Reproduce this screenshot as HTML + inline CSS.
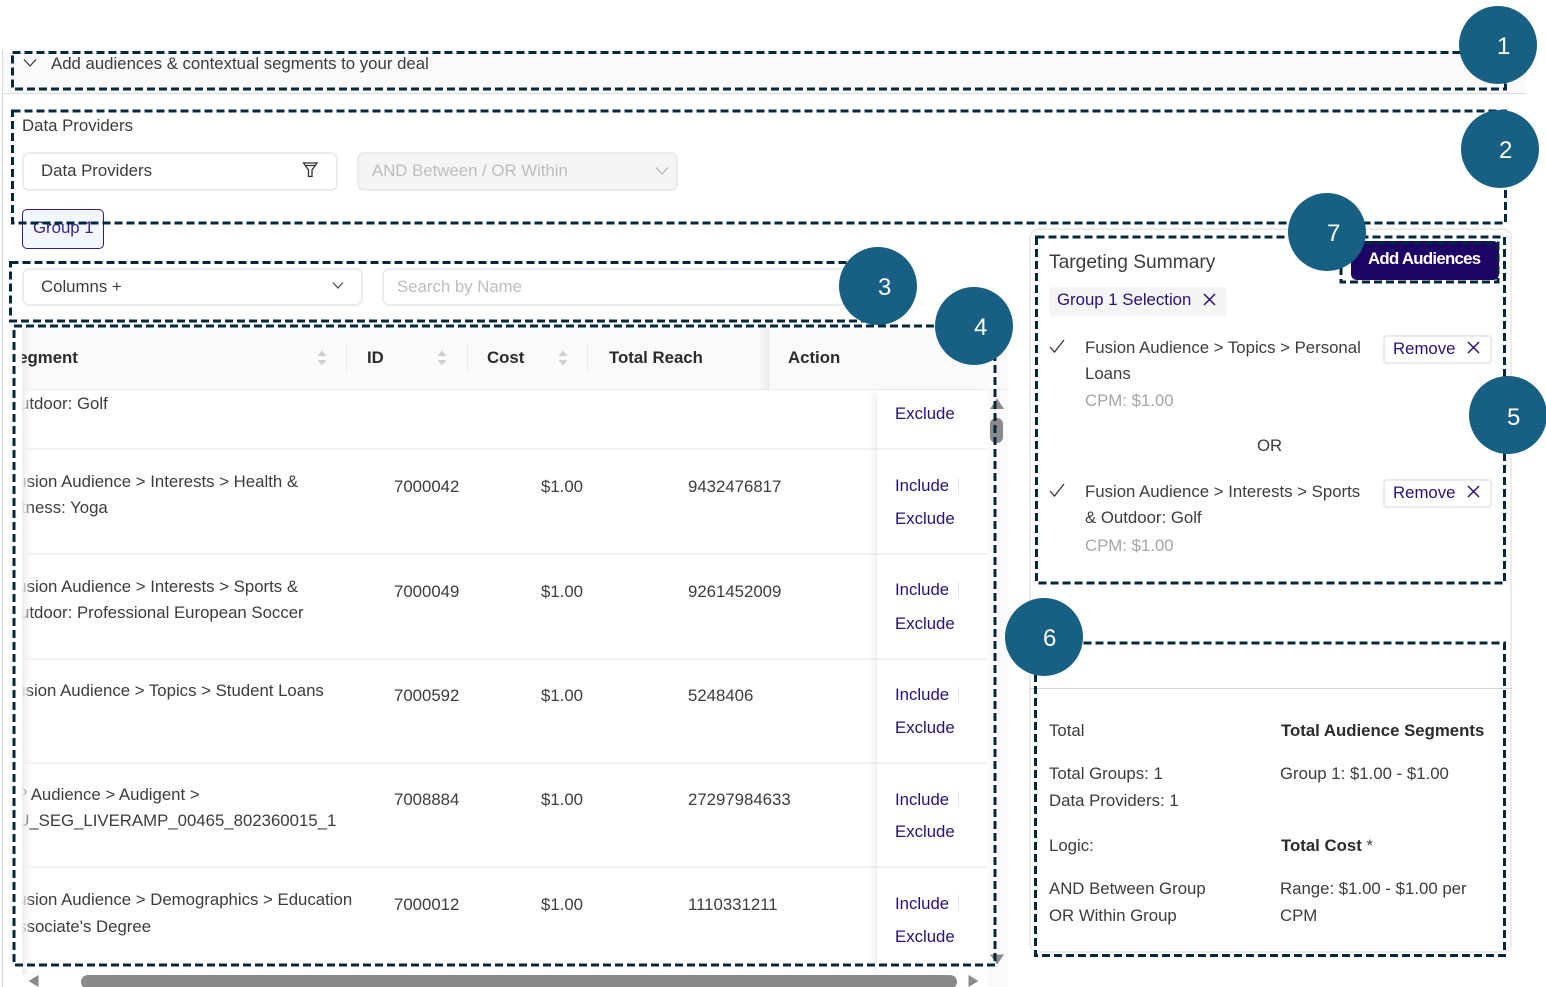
<!DOCTYPE html>
<html><head><meta charset="utf-8"><style>
html,body{margin:0;padding:0;background:#fff}
#p{position:relative;width:1546px;height:987px;overflow:hidden;background:#fff;font-family:"Liberation Sans",sans-serif;font-size:16.8px;color:#3c3c3c}
#p div{position:absolute;box-sizing:border-box}
.t{white-space:nowrap;line-height:20px}
.g{color:#a6a6a6}
.b{font-weight:bold;color:#2b2b2b}
.u{color:#2a0f78}
.box{background:#fff;border:2px solid #ebebeb;border-radius:7px}
.c{width:78px;height:78px;border-radius:50%;background:#176084}
.n{color:#fff;font-size:24px;line-height:28px;white-space:nowrap}
svg{position:absolute;overflow:visible}
</style></head><body><div id="p">
<div style="left:2px;top:50px;width:1px;height:937px;background:#d8d8d8"></div>
<div style="left:3px;top:52px;width:1523px;height:41px;background:#fafafa"></div>
<div style="left:3px;top:93px;width:1523px;height:1px;background:#dedede"></div>
<svg style="left:23px;top:58px" width="14" height="10"><path d="M1 1.5L7 8L13 1.5" fill="none" stroke="#333" stroke-width="1.2"/></svg>
<div class="t" style="left:51px;top:54px">Add audiences &amp; contextual segments to your deal</div>

<div class="t" style="left:22px;top:116px">Data Providers</div>
<div class="box" style="left:22px;top:152px;width:316px;height:39px"></div>
<div class="t" style="left:41px;top:161px">Data Providers</div>
<svg style="left:302px;top:161px" width="17" height="17"><path d="M1.5 2H15L10 9V15.5H6.5V9Z M3.5 4.500H13" fill="none" stroke="#333" stroke-width="1.3"/></svg>
<div class="box" style="left:357px;top:152px;width:321px;height:39px;background:#f5f5f5"></div>
<div class="t" style="left:372px;top:161px;color:#bdbdbd">AND Between / OR Within</div>
<svg style="left:655px;top:166px" width="14" height="10"><path d="M1 1.5L7 8L13 1.5" fill="none" stroke="#b5b5b5" stroke-width="1.2"/></svg>
<div style="left:22px;top:209px;width:82px;height:40px;background:#f2f6ff;border:1px solid #2f1a88;border-radius:5px"></div>
<div class="t u" style="left:33px;top:218px;color:#3a2590">Group 1</div>

<div class="box" style="left:22px;top:268px;width:341px;height:38px"></div>
<div class="t" style="left:41px;top:277px">Columns +</div>
<svg style="left:332px;top:281px" width="12" height="9"><path d="M1 1.5L6 7L11 1.5" fill="none" stroke="#444" stroke-width="1.2"/></svg>
<div class="box" style="left:382px;top:268px;width:490px;height:38px"></div>
<div class="t" style="left:397px;top:277px;color:#bdbdbd">Search by Name</div>

<!-- table -->
<div style="left:22px;top:328px;width:986px;height:62px;background:#fafafa;border-bottom:1px solid #eee"></div>
<div style="left:22px;top:390px;width:966px;height:585px;overflow:hidden;background:#fff">
 <div style="left:0;top:58px;width:966px;height:2px;background:#f2f2f2"></div>
 <div style="left:0;top:163px;width:966px;height:2px;background:#f2f2f2"></div>
 <div style="left:0;top:268px;width:966px;height:2px;background:#f2f2f2"></div>
 <div style="left:0;top:372px;width:966px;height:2px;background:#f2f2f2"></div>
 <div style="left:0;top:476px;width:966px;height:2px;background:#f2f2f2"></div>
 <div class="t" style="left:-15px;top:4px">Outdoor: Golf</div>
 <div class="t" style="left:-15px;top:82px">Fusion Audience &gt; Interests &gt; Health &amp;</div>
 <div class="t" style="left:-15px;top:108px">Fitness: Yoga</div>
 <div class="t" style="left:-15px;top:187px">Fusion Audience &gt; Interests &gt; Sports &amp;</div>
 <div class="t" style="left:-15px;top:213px">Outdoor: Professional European Soccer</div>
 <div class="t" style="left:-16px;top:291px">Fusion Audience &gt; Topics &gt; Student Loans</div>
 <div class="t" style="left:-18px;top:395px">DP Audience &gt; Audigent &gt;</div>
 <div class="t" style="left:-16px;top:421px">EU_SEG_LIVERAMP_00465_802360015_1</div>
 <div class="t" style="left:-15px;top:500px">Fusion Audience &gt; Demographics &gt; Education</div>
 <div class="t" style="left:-15px;top:527px">Associate's Degree</div>
</div>
<div style="left:22px;top:328px;width:10px;height:647px;background:linear-gradient(90deg,#eeeeee,rgba(255,255,255,0))"></div>
<div class="t b" style="left:22px;top:348px;width:56px;overflow:hidden"><span style="margin-left:-15px">Segment</span></div>
<div class="t b" style="left:367px;top:348px">ID</div>
<div class="t b" style="left:487px;top:348px">Cost</div>
<div class="t b" style="left:609px;top:348px">Total Reach</div>
<div class="t b" style="left:788px;top:348px">Action</div>
<div style="left:346px;top:344px;width:1px;height:28px;background:#ececec"></div>
<div style="left:467px;top:344px;width:1px;height:28px;background:#ececec"></div>
<div style="left:587px;top:344px;width:1px;height:28px;background:#ececec"></div>
<svg style="left:317px;top:350px" width="10" height="16"><path d="M5 0.5L9.500 6H0.500ZM5 15.500L9.500 10H0.500Z" fill="#cfcfcf"/></svg>
<svg style="left:437px;top:350px" width="10" height="16"><path d="M5 0.5L9.500 6H0.500ZM5 15.500L9.500 10H0.500Z" fill="#cfcfcf"/></svg>
<svg style="left:558px;top:350px" width="10" height="16"><path d="M5 0.5L9.500 6H0.500ZM5 15.500L9.500 10H0.500Z" fill="#cfcfcf"/></svg>
<div style="left:758px;top:328px;width:10px;height:62px;background:linear-gradient(90deg,rgba(0,0,0,0),rgba(0,0,0,.05))"></div>
<div style="left:768px;top:328px;width:1px;height:62px;background:#e8e8e8"></div>
<div style="left:877px;top:390px;width:111px;height:585px;background:#fff;box-shadow:-5px 0 7px -3px rgba(0,0,0,.09)"></div>
<div style="left:877px;top:448px;width:111px;height:2px;background:#f2f2f2"></div>
<div style="left:877px;top:553px;width:111px;height:2px;background:#f2f2f2"></div>
<div style="left:877px;top:658px;width:111px;height:2px;background:#f2f2f2"></div>
<div style="left:877px;top:762px;width:111px;height:2px;background:#f2f2f2"></div>
<div style="left:877px;top:866px;width:111px;height:2px;background:#f2f2f2"></div>
<div style="left:988px;top:390px;width:20px;height:597px;background:#fafafa"></div>

<div class="t" style="left:394px;top:477px">7000042</div><div class="t" style="left:541px;top:477px">$1.00</div><div class="t" style="left:688px;top:477px">9432476817</div>
<div class="t" style="left:394px;top:582px">7000049</div><div class="t" style="left:541px;top:582px">$1.00</div><div class="t" style="left:688px;top:582px">9261452009</div>
<div class="t" style="left:394px;top:686px">7000592</div><div class="t" style="left:541px;top:686px">$1.00</div><div class="t" style="left:688px;top:686px">5248406</div>
<div class="t" style="left:394px;top:790px">7008884</div><div class="t" style="left:541px;top:790px">$1.00</div><div class="t" style="left:688px;top:790px">27297984633</div>
<div class="t" style="left:394px;top:895px">7000012</div><div class="t" style="left:541px;top:895px">$1.00</div><div class="t" style="left:688px;top:895px">1110331211</div>

<div class="t u" style="left:895px;top:404px">Exclude</div>
<div class="t u" style="left:895px;top:476px">Include</div><div class="t u" style="left:895px;top:509px">Exclude</div>
<div class="t u" style="left:895px;top:580px">Include</div><div class="t u" style="left:895px;top:614px">Exclude</div>
<div class="t u" style="left:895px;top:685px">Include</div><div class="t u" style="left:895px;top:718px">Exclude</div>
<div class="t u" style="left:895px;top:790px">Include</div><div class="t u" style="left:895px;top:822px">Exclude</div>
<div class="t u" style="left:895px;top:894px">Include</div><div class="t u" style="left:895px;top:927px">Exclude</div>
<div style="left:958px;top:478px;width:1px;height:16px;background:#e4e4e4"></div>
<div style="left:958px;top:582px;width:1px;height:16px;background:#e4e4e4"></div>
<div style="left:958px;top:687px;width:1px;height:16px;background:#e4e4e4"></div>
<div style="left:958px;top:791px;width:1px;height:16px;background:#e4e4e4"></div>
<div style="left:958px;top:895px;width:1px;height:16px;background:#e4e4e4"></div>

<svg style="left:989px;top:398px" width="16" height="12"><path d="M8 0.5L15 11H1Z" fill="#8a8a8a"/></svg>
<div style="left:990px;top:418px;width:13px;height:25px;border-radius:6px;background:#8a8a8a"></div>
<svg style="left:989px;top:954px" width="16" height="11"><path d="M8 10.5L15 0.5H1Z" fill="#8a8a8a"/></svg>
<svg style="left:28px;top:975px" width="11" height="12"><path d="M0.5 6L10.500 0V12Z" fill="#8a8a8a"/></svg>
<div style="left:81px;top:975px;width:876px;height:14px;border-radius:7px;background:#8a8a8a"></div>
<svg style="left:968px;top:975px" width="11" height="12"><path d="M10.500 6L0.500 0V12Z" fill="#8a8a8a"/></svg>

<!-- right panel -->
<div style="left:1029px;top:228px;width:483px;height:725px;border:2px solid #ececec;border-radius:10px"></div>
<div style="left:1029px;top:688px;width:483px;height:1px;background:#d4d4d4"></div>
<div class="t" style="left:1049px;top:253px;font-size:19.2px">Targeting Summary</div>
<div style="left:1351px;top:241px;width:148px;height:39px;background:#1d0565;border-radius:6px"></div>
<div class="t" style="left:1368px;top:249px;color:#fff;font-weight:bold;letter-spacing:-.7px">Add Audiences</div>
<div style="left:1049px;top:287px;width:178px;height:29px;background:#f5f5f5;border-radius:5px"></div>
<div class="t u" style="left:1057px;top:290px">Group 1 Selection</div>
<svg style="left:1203px;top:293px" width="13" height="13"><path d="M1 1L12 12M12 1L1 12" stroke="#2a0f78" stroke-width="1.5"/></svg>

<svg style="left:1049px;top:339px" width="16" height="14"><path d="M1 8L5.500 13L15 1" fill="none" stroke="#333" stroke-width="1.3"/></svg>
<div class="t" style="left:1085px;top:338px">Fusion Audience &gt; Topics &gt; Personal</div>
<div class="t" style="left:1085px;top:364px">Loans</div>
<div class="t g" style="left:1085px;top:391px">CPM: $1.00</div>
<div style="left:1383px;top:335px;width:109px;height:29px;border:2px solid #ebebeb;border-radius:4px"></div>
<div class="t u" style="left:1393px;top:339px">Remove</div>
<svg style="left:1467px;top:341px" width="13" height="13"><path d="M1 1L12 12M12 1L1 12" stroke="#2a0f78" stroke-width="1.5"/></svg>
<div class="t" style="left:1257px;top:436px">OR</div>
<svg style="left:1049px;top:483px" width="16" height="14"><path d="M1 8L5.500 13L15 1" fill="none" stroke="#333" stroke-width="1.3"/></svg>
<div class="t" style="left:1085px;top:482px">Fusion Audience &gt; Interests &gt; Sports</div>
<div class="t" style="left:1085px;top:508px">&amp; Outdoor: Golf</div>
<div class="t g" style="left:1085px;top:536px">CPM: $1.00</div>
<div style="left:1383px;top:479px;width:109px;height:29px;border:2px solid #ebebeb;border-radius:4px"></div>
<div class="t u" style="left:1393px;top:483px">Remove</div>
<svg style="left:1467px;top:485px" width="13" height="13"><path d="M1 1L12 12M12 1L1 12" stroke="#2a0f78" stroke-width="1.5"/></svg>

<div class="t" style="left:1049px;top:721px">Total</div>
<div class="t b" style="left:1281px;top:721px">Total Audience Segments</div>
<div class="t" style="left:1049px;top:764px">Total Groups: 1</div>
<div class="t" style="left:1280px;top:764px">Group 1: $1.00 - $1.00</div>
<div class="t" style="left:1049px;top:791px">Data Providers: 1</div>
<div class="t" style="left:1049px;top:836px">Logic:</div>
<div class="t" style="left:1281px;top:836px"><span class="b">Total Cost</span> *</div>
<div class="t" style="left:1049px;top:879px">AND Between Group</div>
<div class="t" style="left:1280px;top:879px">Range: $1.00 - $1.00 per</div>
<div class="t" style="left:1049px;top:906px">OR Within Group</div>
<div class="t" style="left:1280px;top:906px">CPM</div>

<svg style="left:0;top:0" width="1546" height="987" fill="none" stroke="#04283b" stroke-width="3" stroke-dasharray="8 4">
<rect x="12.500" y="52.500" width="1493" height="36.500"/>
<rect x="12.500" y="111" width="1493" height="112"/>
<rect x="10.500" y="262.500" width="880" height="58.500"/>
<rect x="14" y="326" width="981" height="639"/>
<rect x="1036.500" y="237" width="468" height="346"/>
<rect x="1341" y="243" width="157" height="39"/>
<rect x="1035.500" y="643" width="469" height="312.500"/>
</svg>

<div class="c" style="left:1459px;top:6px"></div><div class="n" style="left:1497px;top:33px">1</div>
<div class="c" style="left:1461px;top:110px"></div><div class="n" style="left:1499px;top:137px">2</div>
<div class="c" style="left:839px;top:247px"></div><div class="n" style="left:878px;top:274px">3</div>
<div class="c" style="left:935px;top:287px"></div><div class="n" style="left:974px;top:314px">4</div>
<div class="c" style="left:1469px;top:376px"></div><div class="n" style="left:1507px;top:404px">5</div>
<div class="c" style="left:1005px;top:598px"></div><div class="n" style="left:1043px;top:625px">6</div>
<div class="c" style="left:1288px;top:193px"></div><div class="n" style="left:1327px;top:220px">7</div>
</div></body></html>
